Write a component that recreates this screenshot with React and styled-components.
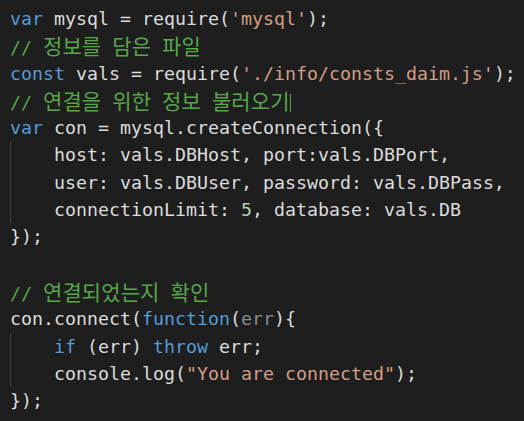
import React from 'react';
import styled, { createGlobalStyle } from 'styled-components';

const Global = createGlobalStyle`
  html, body { margin: 0; padding: 0; background: #1e1e1e; }
  body { width: 524px; height: 421px; overflow: hidden; }
`;

const LINE = 27.3;

const Editor = styled.div`
  box-sizing: border-box;
  width: 524px;
  height: 421px;
  background: #1e1e1e;
  padding: 5px 0 0 10px;
  font-family: "DejaVu Sans Mono", "Liberation Mono", monospace;
  font-size: 18.27px;
  color: #dcdcdc;
  white-space: pre;
`;

const Line = styled.div`
  height: ${LINE}px;
  line-height: ${LINE}px;
`;

const Block = styled.div`
  border-left: 1px solid #404040;
  padding-left: 43px;
`;

const Kw = styled.span`color: #569cd6;`;
const Str = styled.span`color: #d69d85;`;
const Num = styled.span`color: #b5cea8;`;
const Param = styled.span`color: #8c8c8c;`;
const Comment = styled.span`color: #57a64a;`;
const Ko = styled.span`
  font-family: "Noto Sans CJK KR", sans-serif;
  font-size: 21px;
  font-weight: 400;
  letter-spacing: 0.1px;
`;
const Caret = styled.span`
  display: inline-block;
  width: 1px;
  height: 18px;
  background: #57a64a;
  vertical-align: -3px;
`;

function renderComment(text) {
  return text.split(/([\uAC00-\uD7A3]+)/).map((part, i) =>
    /[\uAC00-\uD7A3]/.test(part) ? <Ko key={i}>{part}</Ko> : part
  );
}

export default function App() {
  return (
    <>
      <Global />
      <Editor>
        <Line><Kw>var</Kw> mysql = require(<Str>'mysql'</Str>);</Line>
        <Line><Comment>{renderComment('// 정보를 담은 파일')}</Comment></Line>
        <Line><Kw>const</Kw> vals = require(<Str>'./info/consts_daim.js'</Str>);</Line>
        <Line><Comment>{renderComment('// 연결을 위한 정보 불러오기')}<Caret /></Comment></Line>
        <Line><Kw>var</Kw> con = mysql.createConnection({'{'}</Line>
        <Block>
          <Line>host: vals.DBHost, port:vals.DBPort,</Line>
          <Line>user: vals.DBUser, password: vals.DBPass,</Line>
          <Line>connectionLimit: <Num>5</Num>, database: vals.DB</Line>
        </Block>
        <Line>{'});'}</Line>
        <Line />
        <Line><Comment>{renderComment('// 연결되었는지 확인')}</Comment></Line>
        <Line>con.connect(<Kw>function</Kw>(<Param>err</Param>{'){'}</Line>
        <Block>
          <Line><Kw>if</Kw> (err) <Kw>throw</Kw> err;</Line>
          <Line>console.log(<Str>"You are connected"</Str>);</Line>
        </Block>
        <Line>{'});'}</Line>
      </Editor>
    </>
  );
}
